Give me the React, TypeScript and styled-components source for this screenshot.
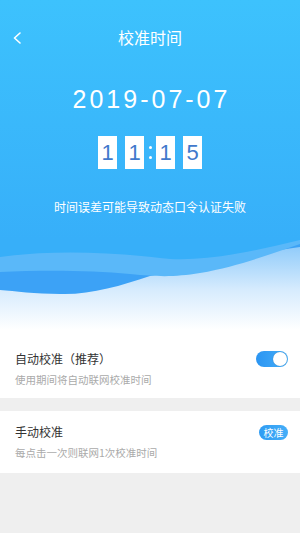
import styled, { createGlobalStyle } from 'styled-components';

const GlobalStyle = createGlobalStyle`
  html, body {
    margin: 0;
    padding: 0;
    background: #efefef;
    font-family: "Liberation Sans", "Noto Sans CJK SC", sans-serif;
  }
`;

const Page = styled.div`
  width: 300px;
  min-height: 533px;
  background: #efefef;
  overflow: hidden;
`;

const Header = styled.div`
  background: linear-gradient(180deg, #3dc2fd 0%, #37aff9 100%);
  display: flex;
  flex-direction: column;
  align-items: center;
  padding-bottom: 25px;
  color: #fff;
`;

const NavBar = styled.div`
  position: relative;
  width: 100%;
  height: 74px;
  display: flex;
  align-items: center;
  justify-content: center;
`;

const BackButton = styled.div`
  position: absolute;
  left: 13px;
  top: 32px;
  width: 9px;
  height: 12px;
  display: flex;
`;

const Title = styled.div`
  font-family: "Noto Sans CJK SC", sans-serif;
  font-size: 16px;
  line-height: 20px;
`;

const DateText = styled.div`
  margin-top: 10px;
  font-size: 25px;
  line-height: 30px;
  letter-spacing: 3px;
  padding-left: 3px;
`;

const Clock = styled.div`
  margin-top: 22px;
  display: flex;
  align-items: center;
`;

const DigitPair = styled.div`
  display: flex;
  gap: 8px;
`;

const DigitBox = styled.div`
  width: 19px;
  height: 33px;
  background: #fff;
  color: #4179cc;
  font-size: 22px;
  display: flex;
  align-items: center;
  justify-content: center;
`;

const Colon = styled.div`
  width: 12px;
  height: 33px;
  display: flex;
  flex-direction: column;
  align-items: center;
  justify-content: center;
  gap: 7px;

  & > span {
    width: 3px;
    height: 3px;
    border-radius: 50%;
    background: #fff;
  }
`;

const Hint = styled.div`
  margin-top: 30px;
  font-family: "Noto Sans CJK SC", sans-serif;
  font-size: 12px;
  line-height: 16px;
`;

const Wave = styled.svg`
  display: block;
  width: 300px;
  height: 90px;
`;

const Item = styled.div<{ $top: number; $bottom: number }>`
  background: #fff;
  display: flex;
  align-items: flex-start;
  justify-content: space-between;
  padding: ${(p) => p.$top}px 12px ${(p) => p.$bottom}px 15px;
`;

const ItemText = styled.div`
  display: flex;
  flex-direction: column;
  gap: 4px;
  font-family: "Noto Sans CJK SC", sans-serif;
`;

const ItemTitle = styled.div`
  font-size: 12px;
  line-height: 18px;
  color: #333;
`;

const ItemSub = styled.div`
  font-size: 10.5px;
  line-height: 16px;
  color: #aaa;
`;

const Separator = styled.div`
  height: 13px;
  background: #efefef;
`;

const Toggle = styled.div`
  margin-top: 1px;
  width: 32px;
  height: 16px;
  border-radius: 8px;
  background: linear-gradient(90deg, #2b95f2 0%, #46aef8 100%);
  display: flex;
  align-items: center;
  justify-content: flex-end;
  padding: 0 1px;
  box-sizing: border-box;

  & > span {
    width: 14px;
    height: 14px;
    border-radius: 50%;
    background: #fff;
    box-shadow: 0 0 1px rgba(0, 0, 0, 0.3);
  }
`;

const CalibrateButton = styled.div`
  margin-top: 2px;
  width: 29px;
  height: 15px;
  border-radius: 8px;
  background: linear-gradient(90deg, #2f9cf3 0%, #45aef8 100%);
  color: #fff;
  font-family: "Noto Sans CJK SC", sans-serif;
  font-size: 10px;
  line-height: 15px;
  text-align: center;
`;

export default function App() {
  return (
    <Page>
      <GlobalStyle />
      <Header>
        <NavBar>
          <BackButton>
            <svg width="9" height="12" viewBox="0 0 9 12">
              <polyline points="7,1 1.5,6 7,11" fill="none" stroke="#fff" strokeWidth="1.6" strokeLinecap="round" strokeLinejoin="round" />
            </svg>
          </BackButton>
          <Title>校准时间</Title>
        </NavBar>
        <DateText>2019-07-07</DateText>
        <Clock>
          <DigitPair>
            <DigitBox>1</DigitBox>
            <DigitBox>1</DigitBox>
          </DigitPair>
          <Colon>
            <span />
            <span />
          </Colon>
          <DigitPair>
            <DigitBox>1</DigitBox>
            <DigitBox>5</DigitBox>
          </DigitPair>
        </Clock>
        <Hint>时间误差可能导致动态口令认证失败</Hint>
      </Header>
      <Wave viewBox="0 0 300 90" preserveAspectRatio="none">
        <defs>
          <linearGradient id="fade" x1="0" y1="0" x2="0" y2="1">
            <stop offset="0" stopColor="#86c7fa" />
            <stop offset="0.55" stopColor="#d6ebfd" />
            <stop offset="1" stopColor="#ffffff" />
          </linearGradient>
        </defs>
        <rect x="0" y="0" width="300" height="90" fill="url(#fade)" />
        <path d="M0,0 H300 V7 C260,12 200,25 150,36 C120,46 90,55 60,54 C35,54 15,51 0,50 Z" fill="#3ca2f6" />
        <path d="M0,0 H300 V4 C270,14 240,26 200,33 C175,37 160,37 130,34 C90,30 40,30 0,32 Z" fill="#5ab8f9" />
        <path d="M0,0 H300 V0 C250,12 200,23 160,18 C110,12 50,10 0,17 Z" fill="#37aff9" />
      </Wave>
      <Item $top={20} $bottom={10}>
        <ItemText>
          <ItemTitle>自动校准（推荐）</ItemTitle>
          <ItemSub>使用期间将自动联网校准时间</ItemSub>
        </ItemText>
        <Toggle>
          <span />
        </Toggle>
      </Item>
      <Separator />
      <Item $top={12} $bottom={12}>
        <ItemText>
          <ItemTitle>手动校准</ItemTitle>
          <ItemSub>每点击一次则联网1次校准时间</ItemSub>
        </ItemText>
        <CalibrateButton>校准</CalibrateButton>
      </Item>
    </Page>
  );
}
